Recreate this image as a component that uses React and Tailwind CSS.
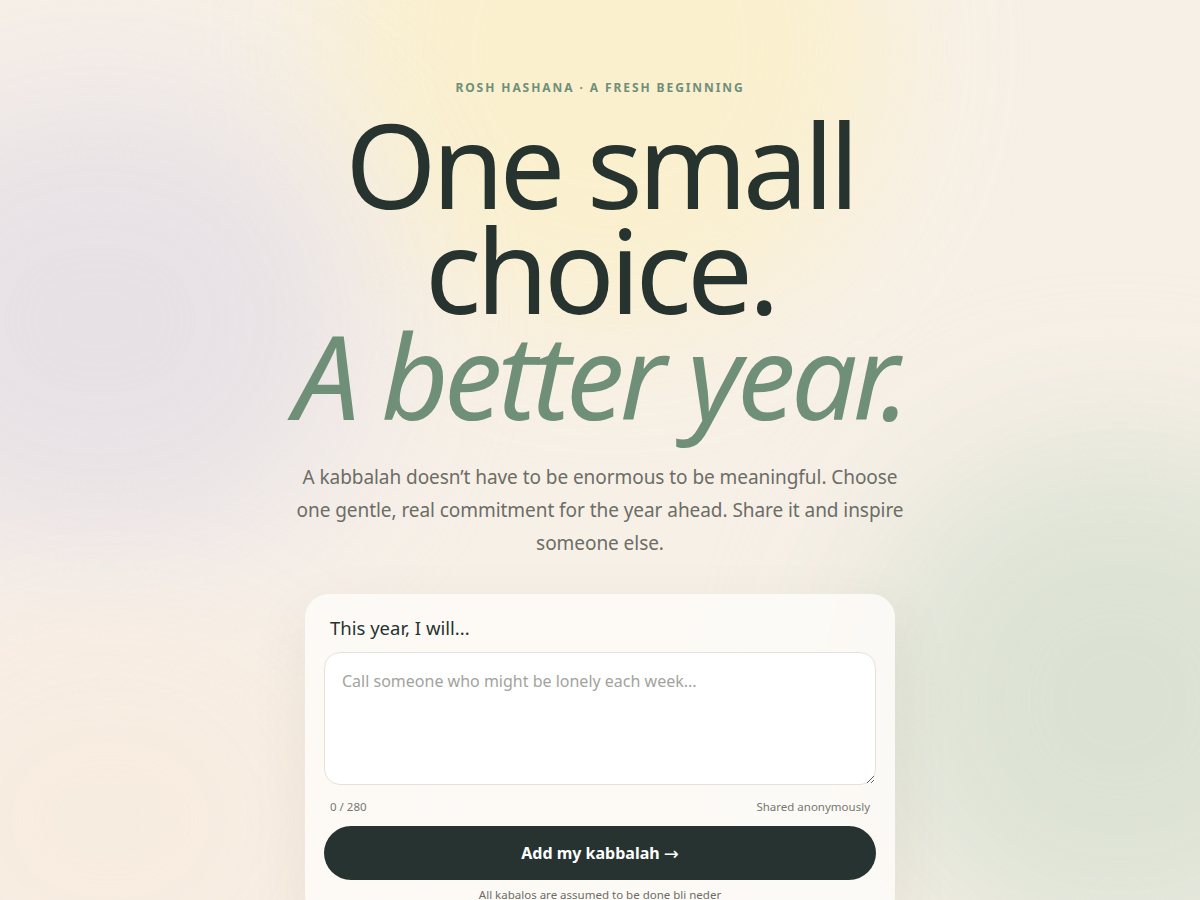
import React, { useState } from 'react';

const App = () => {
  const [text, setText] = useState('');

  return (
    <div
      className="relative min-h-screen overflow-hidden bg-[#f7f0e7] text-[#26332f]"
      style={{ fontFamily: '"Noto Sans", "Open Sans", sans-serif' }}
    >
      {/* soft background glows */}
      <div className="pointer-events-none absolute left-[330px] top-[-230px] h-[560px] w-[560px] rounded-full bg-[#fbf0c8] opacity-80 blur-[70px]" />
      <div className="pointer-events-none absolute left-[-160px] top-[90px] h-[460px] w-[520px] rounded-full bg-[#e6e0e6] opacity-90 blur-[80px]" />
      <div className="pointer-events-none absolute left-[860px] top-[440px] h-[520px] w-[520px] rounded-full bg-[#d9e1d3] opacity-90 blur-[80px]" />
      <div className="pointer-events-none absolute left-[-120px] top-[620px] h-[400px] w-[460px] rounded-full bg-[#f8ece0] opacity-90 blur-[70px]" />

      <div className="relative flex flex-col items-center px-6 pt-[79px]">
        <p className="text-[12px] font-bold uppercase tracking-[0.16em] text-[#6f8f78]">
          Rosh Hashana · A Fresh Beginning
        </p>

        <h1 className="mt-[14px] text-center text-[117px] font-normal leading-[0.9] tracking-[-0.04em] text-[#26332f]">
          One small
          <br />
          choice.
          <br />
          <span className="italic text-[#6f8f78]">A better year.</span>
        </h1>

        <p className="mt-[34px] max-w-[620px] text-center text-[19px] leading-[33px] tracking-[-0.003em] text-[#6b6d66]">
          A kabbalah doesn’t have to be enormous to be meaningful. Choose one gentle, real
          commitment for the year ahead. Share it and inspire someone else.
        </p>

        <div className="mt-[34px] w-[590px] rounded-[24px] bg-[#fdfbf7]/90 px-[19px] pb-4 pt-[22px] shadow-[0_20px_60px_rgba(60,60,40,0.08)]">
          <label className="block px-[6px] text-[18.5px] leading-6 text-[#26332f]">
            This year, I will...
          </label>
          <textarea
            value={text}
            maxLength={280}
            onChange={(e) => setText(e.target.value)}
            placeholder="Call someone who might be lonely each week..."
            className="mt-[12px] block h-[133px] w-full rounded-[16px] border border-[#e6e2da] bg-white px-[17px] py-[16px] text-[16px] leading-6 text-[#26332f] placeholder:text-[#a3a39e] focus:outline-none"
          />
          <div className="mt-[13px] flex justify-between px-[6px] text-[11.5px] text-[#77776f]">
            <span>{text.length} / 280</span>
            <span>Shared anonymously</span>
          </div>
          <button className="mt-[11px] flex h-[54px] w-full items-center justify-center gap-[4px] rounded-full bg-[#263330] text-[16px] font-bold text-white">
            Add my kabbalah
            <span style={{ fontFamily: '"DejaVu Sans", sans-serif' }} className="text-[18px] font-normal">
              →
            </span>
          </button>
          <p className="mt-[6px] text-center text-[11.5px] text-[#6b6d66]">
            All kabalos are assumed to be done bli neder
          </p>
        </div>
      </div>
    </div>
  );
};

export default App;
